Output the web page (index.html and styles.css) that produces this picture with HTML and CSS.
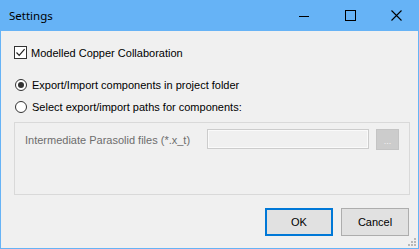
FILE: index.html
```html
<!DOCTYPE html>
<html>
<head>
<meta charset="utf-8">
<link rel="stylesheet" href="styles.css">
</head>
<body>
<div class="window">
  <div class="titlebar">
    <div class="title">Settings</div>
    <div class="caption-buttons">
      <div class="cap-btn">
        <svg width="10" height="10" viewBox="0 0 10 10"><path d="M0 5.5H10" stroke="#000" stroke-width="1"/></svg>
      </div>
      <div class="cap-btn">
        <svg width="11" height="11" viewBox="0 0 11 11"><rect x="0.5" y="0.5" width="10" height="10" fill="none" stroke="#000" stroke-width="1"/></svg>
      </div>
      <div class="cap-btn">
        <svg width="11" height="11" viewBox="0 0 11 11"><path d="M0.5 0.5L10.5 10.5M10.5 0.5L0.5 10.5" stroke="#000" stroke-width="1.1"/></svg>
      </div>
    </div>
  </div>
  <div class="content">
    <div class="check-row">
      <span class="checkbox">
        <svg width="11" height="11" viewBox="0 0 11 11"><path d="M1.5 5.5L4.2 8.3L9.6 2.2" fill="none" stroke="#222" stroke-width="1.2"/></svg>
      </span>
      <span class="label">Modelled Copper Collaboration</span>
    </div>
    <div class="radio-row first">
      <span class="radio checked"><span class="dot"></span></span>
      <span class="label">Export/Import components in project folder</span>
    </div>
    <div class="radio-row second">
      <span class="radio"></span>
      <span class="label">Select export/import paths for components:</span>
    </div>
    <div class="panel">
      <div class="path-row">
        <span class="label disabled">Intermediate Parasolid files (*.x_t)</span>
        <span class="textbox"></span>
        <span class="browse">...</span>
      </div>
    </div>
    <div class="footer">
      <div class="btn default">OK</div>
      <div class="btn">Cancel</div>
    </div>
    <svg class="grip" width="8" height="8" viewBox="0 0 8 8">
      <rect x="6" y="0" width="2" height="2" fill="#B8B8B8"/>
      <rect x="3" y="3" width="2" height="2" fill="#B8B8B8"/>
      <rect x="6" y="3" width="2" height="2" fill="#B8B8B8"/>
      <rect x="0" y="6" width="2" height="2" fill="#B8B8B8"/>
      <rect x="3" y="6" width="2" height="2" fill="#B8B8B8"/>
      <rect x="6" y="6" width="2" height="2" fill="#B8B8B8"/>
    </svg>
  </div>
</div>
</body>
</html>
```
FILE: styles.css
```css
html, body {
  margin: 0;
  padding: 0;
  background: #F0F0F0;
}
.window {
  width: 419px;
  height: 249px;
  box-sizing: border-box;
  border: 1px solid #66B3F6;
  border-top: none;
  display: flex;
  flex-direction: column;
  font-family: "Liberation Sans", Arial, sans-serif;
  font-size: 11px;
  color: #000;
}
.titlebar {
  height: 31px;
  margin: 0 -1px;
  background: #66B3F6;
  display: flex;
  align-items: center;
  justify-content: space-between;
}
.title {
  font-family: "Noto Sans", "Open Sans", sans-serif;
  font-size: 11.5px;
  padding-left: 9px;
  padding-bottom: 1px;
  color: #000;
}
.caption-buttons {
  display: flex;
  height: 31px;
}
.cap-btn {
  width: 46px;
  height: 31px;
  display: flex;
  align-items: center;
  justify-content: center;
}
.cap-btn svg {
  display: block;
}
.content {
  flex: 1;
  position: relative;
  background: #F0F0F0;
  display: flex;
  flex-direction: column;
}
.check-row, .radio-row {
  display: flex;
  align-items: center;
  height: 13px;
}
.check-row {
  margin-top: 15px;
  padding-left: 13px;
}
.checkbox {
  width: 13px;
  height: 13px;
  box-sizing: border-box;
  border: 1px solid #333;
  background: #fff;
  display: flex;
  align-items: center;
  justify-content: center;
  margin-right: 4px;
}
.checkbox svg { display: block; }
.radio-row {
  padding-left: 14px;
  height: 12px;
}
.radio-row.first { margin-top: 20px; }
.radio-row.second { margin-top: 10px; }
.radio {
  width: 12px;
  height: 12px;
  box-sizing: border-box;
  border: 1px solid #333;
  border-radius: 50%;
  background: #fff;
  display: flex;
  align-items: center;
  justify-content: center;
  margin-right: 5px;
}
.radio .dot {
  width: 6px;
  height: 6px;
  border-radius: 50%;
  background: #333;
}
.label {
  white-space: nowrap;
}
.panel {
  margin: 9px 0 0 13px;
  width: 396px;
  height: 73px;
  box-sizing: border-box;
  border: 1px solid #D9D9D9;
}
.path-row {
  display: flex;
  align-items: center;
  margin-top: 5px;
  padding-left: 10px;
  height: 21px;
}
.disabled {
  color: #6D6D6D;
  width: 182px;
  padding-top: 3px;
}
.textbox {
  width: 162px;
  height: 20px;
  box-sizing: border-box;
  border: 1px solid #CCCCCC;
  box-shadow: inset 0 0 0 1px #FAFAFA;
  background: #F0F0F0;
  margin-right: 7px;
}
.browse {
  width: 23px;
  height: 21px;
  box-sizing: border-box;
  border: 1px solid #C4C4C4;
  background: #CCCCCC;
  color: #F4F4F4;
  font-size: 9px;
  display: flex;
  align-items: center;
  justify-content: center;
  padding-top: 2px;
  margin-top: 2px;
}
.footer {
  display: flex;
  justify-content: flex-end;
  gap: 8px;
  margin-top: 13px;
  padding-right: 9px;
}
.btn {
  width: 68px;
  height: 28px;
  box-sizing: border-box;
  border: 1px solid #ADADAD;
  background: #E1E1E1;
  display: flex;
  align-items: center;
  justify-content: center;
  font-size: 11px;
}
.btn.default {
  border: 2px solid #0078D7;
}
.grip {
  position: absolute;
  right: 2px;
  bottom: 2px;
}
```
